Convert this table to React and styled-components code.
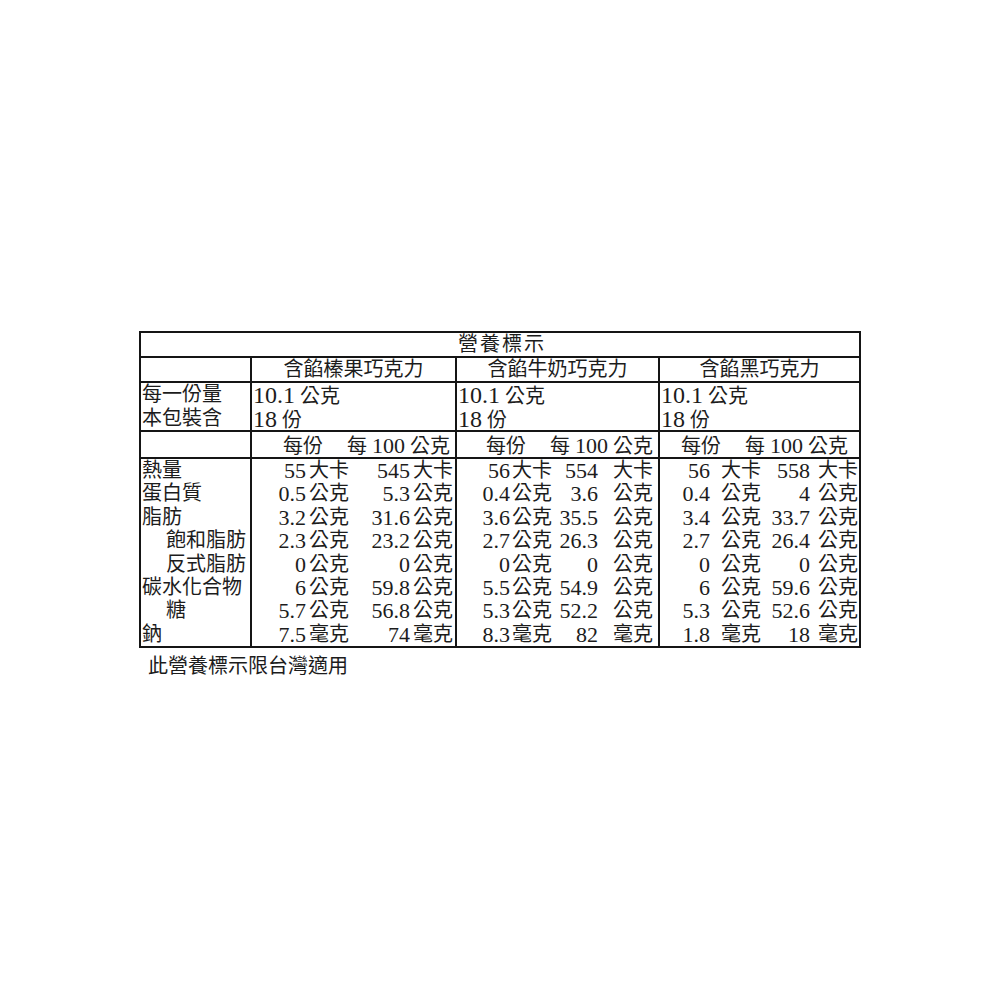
import React from "react";
import styled, { createGlobalStyle } from "styled-components";

const Global = createGlobalStyle`
  html, body { margin: 0; padding: 0; background: #fff; }
  body {
    font-family: "Liberation Serif", "Noto Sans CJK TC", serif;
    color: #1c1c1c;
    font-size: 20px;
  }
`;

const Page = styled.div`
  width: 1000px;
  height: 1000px;
  padding: 331px 0 0 139px;
  box-sizing: border-box;
`;

const Label = styled.div`
  width: 722px;
  box-sizing: border-box;
  border: 2px solid #151515;
`;

const Row = styled.div`
  display: grid;
  grid-template-columns: 109px 205px 203px 201px;
  border-bottom: ${(p) => (p.$last ? "none" : "2px solid #151515")};
  height: ${(p) => p.$h}px;
`;

const TitleRow = styled.div`
  height: 23px;
  line-height: 23px;
  text-align: center;
  letter-spacing: 2px;
  padding-left: 4px;
  border-bottom: 2px solid #151515;
`;

const Cell = styled.div`
  box-sizing: border-box;
  border-left: ${(p) => (p.$first ? "none" : "2px solid #151515")};
  overflow: hidden;
  white-space: nowrap;
`;

const NameCell = styled(Cell)`
  text-align: center;
  line-height: 23px;
`;

const ServingCell = styled(Cell)`
  line-height: 23.5px;
  padding-left: 1px;
`;

const Line = styled.div`
  height: 23.5px;
  line-height: 23.5px;
`;

const Digits = styled.span`
  font-size: ${(p) => p.$size || 22}px;
  line-height: 1;
  letter-spacing: ${(p) => p.$ls || 0}px;
`;

const SubHeadCell = styled(Cell)`
  display: flex;
  justify-content: flex-end;
  align-items: baseline;
  gap: 24px;
  padding-top: 3px;
  line-height: 21px;
  padding-right: ${(p) => p.$pr}px;
`;

const LabelList = styled(Cell)`
  line-height: 23.4px;
  padding-left: 1px;
`;

const Nutrient = styled.div`
  padding-left: ${(p) => (p.$indent ? 24 : 0)}px;
`;

const ValueGrid = styled(Cell)`
  display: grid;
  grid-template-columns: ${(p) => p.$cols};
  grid-auto-rows: 23.4px;
  line-height: 23.4px;
`;

const Num = styled.span`
  text-align: right;
  font-size: 22px;
  line-height: 23.4px;
`;

const Unit = styled.span`
  text-align: ${(p) => (p.$right ? "right" : "left")};
  padding-left: ${(p) => p.$pl || 0}px;
  padding-right: ${(p) => p.$pr || 0}px;
`;

const Footer = styled.div`
  padding: 7px 0 0 9px;
  line-height: 22px;
`;

const nutrients = [
  ["熱量", false],
  ["蛋白質", false],
  ["脂肪", false],
  ["飽和脂肪", true],
  ["反式脂肪", true],
  ["碳水化合物", false],
  ["糖", true],
  ["鈉", false],
];

const units = ["大卡", "公克", "公克", "公克", "公克", "公克", "公克", "毫克"];

const products = [
  {
    name: "含餡榛果巧克力",
    cols: "54px 44px 60px 45px",
    u1: { pl: 3 },
    u2: { pl: 3 },
    pr: 5,
    values: [
      ["55", "545"],
      ["0.5", "5.3"],
      ["3.2", "31.6"],
      ["2.3", "23.2"],
      ["0", "0"],
      ["6", "59.8"],
      ["5.7", "56.8"],
      ["7.5", "74"],
    ],
  },
  {
    name: "含餡牛奶巧克力",
    cols: "53px 45px 43px 60px",
    u1: { pl: 2 },
    u2: { right: true, pr: 5 },
    pr: 5,
    values: [
      ["56", "554"],
      ["0.4", "3.6"],
      ["3.6", "35.5"],
      ["2.7", "26.3"],
      ["0", "0"],
      ["5.5", "54.9"],
      ["5.3", "52.2"],
      ["8.3", "82"],
    ],
  },
  {
    name: "含餡黑巧克力",
    cols: "50px 55px 45px 49px",
    u1: { pl: 11 },
    u2: { pl: 8 },
    pr: 11,
    values: [
      ["56", "558"],
      ["0.4", "4"],
      ["3.4", "33.7"],
      ["2.7", "26.4"],
      ["0", "0"],
      ["6", "59.6"],
      ["5.3", "52.6"],
      ["1.8", "18"],
    ],
  },
];

export default function App() {
  return (
    <>
      <Global />
      <Page>
        <Label>
          <TitleRow>營養標示</TitleRow>
          <Row $h={23}>
            <NameCell $first />
            {products.map((p) => (
              <NameCell key={p.name}>{p.name}</NameCell>
            ))}
          </Row>
          <Row $h={47}>
            <ServingCell $first>
              <Line>每一份量</Line>
              <Line>本包裝含</Line>
            </ServingCell>
            {products.map((p) => (
              <ServingCell key={p.name}>
                <Line>
                  <Digits $size={24}>10.1</Digits> 公克
                </Line>
                <Line>
                  <Digits $size={24}>18</Digits> 份
                </Line>
              </ServingCell>
            ))}
          </Row>
          <Row $h={25}>
            <SubHeadCell $first $pr={0} />
            {products.map((p) => (
              <SubHeadCell key={p.name} $pr={p.pr}>
                <span>每份</span>
                <span>
                  每 <Digits>100</Digits> 公克
                </span>
              </SubHeadCell>
            ))}
          </Row>
          <Row $h={187} $last>
            <LabelList $first>
              {nutrients.map(([n, indent]) => (
                <Nutrient key={n} $indent={indent}>
                  {n}
                </Nutrient>
              ))}
            </LabelList>
            {products.map((p) => (
              <ValueGrid key={p.name} $cols={p.cols}>
                {p.values.map(([a, b], i) => (
                  <React.Fragment key={i}>
                    <Num>{a}</Num>
                    <Unit $pl={p.u1.pl}>{units[i]}</Unit>
                    <Num>{b}</Num>
                    <Unit $pl={p.u2.pl} $pr={p.u2.pr} $right={p.u2.right}>
                      {units[i]}
                    </Unit>
                  </React.Fragment>
                ))}
              </ValueGrid>
            ))}
          </Row>
        </Label>
        <Footer>此營養標示限台灣適用</Footer>
      </Page>
    </>
  );
}
